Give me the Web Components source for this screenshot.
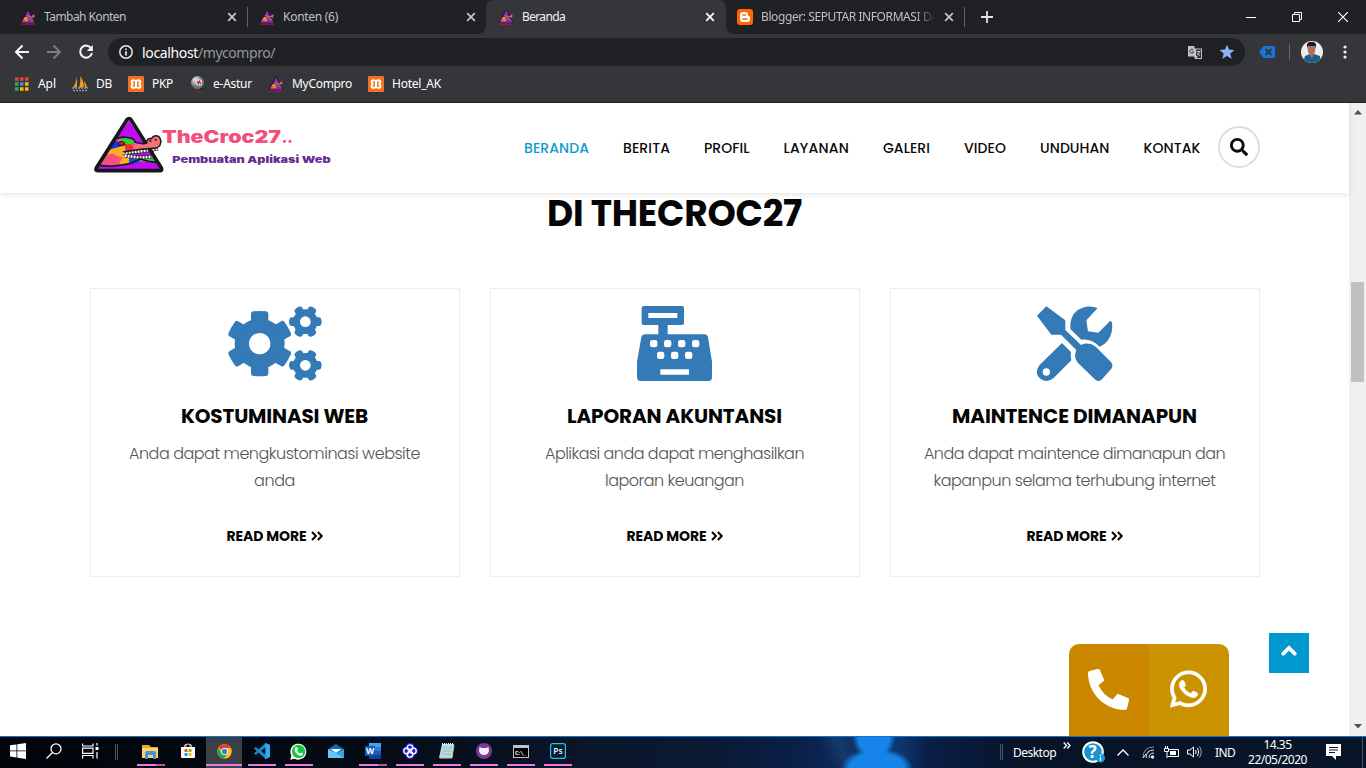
<!DOCTYPE html>
<html lang="id">
<head>
<meta charset="utf-8">
<title>Beranda</title>
<style>
html,body{margin:0;height:100%;overflow:hidden;background:#fff}
body{font-family:"Noto Sans","Open Sans",sans-serif;font-size:12px}
</style>
</head>
<body>
<desktop-screen></desktop-screen>
<script>
const component = (name, css, html) => customElements.define(name, class extends HTMLElement {
  connectedCallback() {
    if (this.shadowRoot) return;
    const body = typeof html === 'function' ? html(this) : html;
    this.attachShadow({ mode: 'open' }).innerHTML = `<style>*{box-sizing:border-box}svg{display:block;flex:none}${css}</style>${body}`;
  }
});

/* A single line of text that is tracked to fill the width given in "w". */
customElements.define('fit-text', class extends HTMLElement {
  connectedCallback() {
    if (this.shadowRoot) return;
    this.attachShadow({ mode: 'open' }).innerHTML =
      `<style>:host{display:inline-block;white-space:nowrap;width:${this.getAttribute('w')}px;text-align:left;flex:none}span{display:inline-block}</style><span><slot></slot></span>`;
    queueMicrotask(() => {
      const span = this.shadowRoot.querySelector('span');
      const natural = span.getBoundingClientRect().width;
      const n = this.textContent.length;
      if (natural) this.style.letterSpacing = ((this.getAttribute('w') - natural) / n).toFixed(3) + 'px';
    });
  }
});

const gear = (cx, cy, r, R, w, hole, start) => {
  let s = `<circle cx="${cx}" cy="${cy}" r="${r}"/>`;
  for (let i = 0; i < 6; i++) s += `<path transform="rotate(${start + i * 60} ${cx} ${cy})" d="M${cx - w},${cy - r * .75}V${cy - R + 8}Q${cx - w},${cy - R + 2} ${cx - w + 7},${cy - R + 1}Q${cx},${cy - R - 1} ${cx + w - 7},${cy - R + 1}Q${cx + w},${cy - R + 2} ${cx + w},${cy - R + 8}V${cy - r * .75}Z"/>`;
  return s + `<circle cx="${cx}" cy="${cy}" r="${hole}" fill="#fff"/>`;
};

const croc = `<path d="M147,46 242,191Q243,197 237,197H56Q48,197 50,190Z" fill="#c40af5"/>
<path d="M57,178 95,122 112,103 137,105 158,118 190,130 134,139 125,150 225,156 229,168 154,172 116,181Z" fill="#f4527a"/>
<path d="M92,128 104,108 131,112 140,120 112,141 84,141Z" fill="#0c35e8"/>
<path d="M88,134 108,128 142,119 127,151 151,157 151,176 122,182 110,154 98,148 80,150Z" fill="#fdae20"/>
<path d="M76,150 98,146 112,153 128,158 112,180 58,178Z" fill="#f4527a"/>
<path d="M112,100 128,101 142,98 162,106 158,118 136,116Z" fill="#23d929"/><path d="M115,114 124,109 134,113 130,121 116,120Z" fill="#e52313" stroke="#191919" stroke-width="3"/>
<path d="M134,120 152,118 163,133 138,136Z" fill="#f22b1e"/>
<path d="M148,158 180,160 178,174 146,178Z" fill="#1747ee"/><path d="M178,160 226,153 230,172 182,168Z" fill="#20dd3a"/>
<path d="M130,142 170,138 222,138 222,154 180,160 140,155Z" fill="#b010e0"/>
<path d="M128,144 182,139 234,131M134,152 180,158 222,155" fill="none" stroke="#191919" stroke-width="11"/>
<path d="M128,144 182,139 234,131M134,152 180,158 222,155" fill="none" stroke="#fff" stroke-width="8" stroke-dasharray="6 3"/>
<path d="M57,181Q90,186 112,182L151,176 180,162 206,169 230,172" fill="none" stroke="#191919" stroke-width="5"/>
<path d="M147,41Q151,41 153,44L244,189Q248,197 239,197H53Q45,197 49,189L141,44Q144,41 147,41Z" fill="none" stroke="#16181a" stroke-width="11"/>
<path d="M158,113 188,116 200,115Q200,98 214,101 222,90 235,94 246,106 238,122L232,128 182,132 158,136 164,124Z" fill="#f4707a"/>
<path d="M99,108Q120,92 145,98 165,100 166,112L188,116 200,115Q200,97 214,101 222,88 236,94 247,106 239,123L230,129 182,133 130,141M208,106 214,110M224,103 230,106" fill="none" stroke="#191919" stroke-width="4.500" stroke-linejoin="round"/>`;
const crocIcon = `<svg width="16" height="16" viewBox="30 30 230 190" preserveAspectRatio="none">${croc}<path d="M45,209H245" stroke="#a81e50" stroke-width="14"/></svg>`;
const xampp = `<svg width="16" height="16" viewBox="0 0 16 16"><rect width="16" height="16" rx="1" fill="#f37021"/><path d="M7.200,5.200Q6.500,4.300 5.400,4.300 3.600,4.400 3.600,6 3.700,7.500 5.400,7.900 3.500,8.400 3.500,10.100 3.700,11.900 5.700,11.900 8,11.700 8,9.500V6.500Q8.200,4.300 10.400,4.300 12.300,4.500 12.300,6 12.200,7.500 10.500,7.900 12.500,8.400 12.500,10.100 12.300,11.900 10.300,11.900 9.300,11.900 8.700,11" fill="none" stroke="#fff" stroke-width="2"/></svg>`;
const closeX = c => `<svg width="10" height="10" viewBox="0 0 10 10"><path d="M1.200,1.200 8.800,8.800M8.800,1.200 1.200,8.800" stroke="${c}" stroke-width="1.700"/></svg>`;
const waPath = 'M380.9 97.1C339 55.1 283.2 32 223.9 32c-122.4 0-222 99.6-222 222 0 39.1 10.2 77.3 29.6 111L0 480l117.7-30.9c32.4 17.7 68.9 27 106.1 27h.1c122.3 0 224.1-99.6 224.1-222 0-59.3-25.2-115-67.1-157zm-157 341.6c-33.2 0-65.7-8.9-94-25.7l-6.7-4-69.8 18.3L72 359.2l-4.4-7c-18.5-29.4-28.2-63.3-28.2-98.2 0-101.7 82.8-184.5 184.6-184.5 49.3 0 95.6 19.2 130.4 54.1 34.8 34.9 56.2 81.2 56.1 130.5 0 101.8-84.9 184.6-186.6 184.6zm101.2-138.2c-5.5-2.8-32.8-16.2-37.9-18-5.1-1.9-8.8-2.8-12.500 2.8-3.7 5.6-14.3 18-17.6 21.8-3.2 3.7-6.5 4.200-12 1.4-32.6-16.3-54-29.1-75.5-66-5.7-9.8 5.7-9.100 16.3-30.3 1.8-3.7.9-6.900-.5-9.700-1.4-2.800-12.500-30.100-17.100-41.200-4.500-10.800-9.100-9.300-12.500-9.500-3.200-.2-6.900-.2-10.600-.2-3.700 0-9.700 1.400-14.800 6.900-5.100 5.600-19.400 19-19.400 46.300 0 27.300 19.900 53.700 22.600 57.400 2.800 3.700 39.100 59.700 94.800 83.800 35.200 15.200 49 16.500 66.600 13.900 10.700-1.600 32.800-13.400 37.400-26.400 4.600-13 4.600-24.100 3.200-26.400-1.300-2.500-5-3.900-10.500-6.600z';

component('browser-tab', `
:host{display:flex;align-items:center;flex:none;width:239px;height:34px;padding:0 10px 0 12px;color:#bdc1c6;position:relative}
:host([active]){width:240px;padding-right:11px;background:#35363a;border-radius:8px 8px 0 0;color:#f1f3f4;z-index:1}
:host([active])::before,:host([active])::after{content:"";position:absolute;bottom:0;width:8px;height:8px}
:host([active])::before{left:-8px;background:radial-gradient(circle at 0 0,transparent 7.5px,#35363a 8px)}
:host([active])::after{right:-8px;background:radial-gradient(circle at 100% 0,transparent 7.5px,#35363a 8px)}
.t{flex:1;margin-left:8px;overflow:hidden;white-space:nowrap;line-height:18px;height:18px}
:host([fade]) .t{-webkit-mask:linear-gradient(90deg,#000 154px,transparent 174px)}
:host([fade]){padding-left:11px;width:238px}
.x{margin-left:8px}
.sep{position:absolute;right:-1px;top:7px;width:1px;height:20px;background:#5f6368}
:host([active]) .sep,:host([nosep]) .sep{display:none}`,
  h => `<slot name="icon">${crocIcon}</slot><div class="t"><slot></slot></div><div class="x">${closeX(h.hasAttribute('active') ? '#fff' : '#c4c7cb')}</div><div class="sep"></div>`);

component('tab-strip', `
:host{display:flex;height:34px;background:#202124;padding-left:8px}
.plus{width:20px;margin-left:13px;display:flex;align-items:center;justify-content:center}
.win{margin-left:auto;display:flex;width:138px;align-items:center}
.win div{width:46px;height:28px;display:grid;place-items:center}`, `
<browser-tab><fit-text w="82">Tambah Konten</fit-text></browser-tab>
<browser-tab nosep><fit-text w="55">Konten (6)</fit-text></browser-tab>
<browser-tab active><fit-text w="43">Beranda</fit-text></browser-tab>
<browser-tab fade><svg slot="icon" width="16" height="16" viewBox="0 0 16 16"><rect width="16" height="16" rx="3" fill="#ff6500"/><path d="M3,6Q3,3 6,3H8Q11,3 11,6 11,7 12,7 13,7 13,8.500V10Q13,13 10,13H6Q3,13 3,10Z" fill="#fff"/><path d="M6,6H8.500M6,10H10" stroke="#ff6500" stroke-width="1.500" stroke-linecap="round"/></svg><fit-text w="186">Blogger: SEPUTAR INFORMASI DAN</fit-text></browser-tab>
<div class="plus"><svg width="12" height="12" viewBox="0 0 12 12"><path d="M6,0V12M0,6H12" stroke="#e0e2e5" stroke-width="1.800"/></svg></div>
<div class="win"><div><svg width="10" height="10"><path d="M0,5.500H10" stroke="#fff"/></svg></div><div><svg width="10" height="10" fill="none" stroke="#fff"><path d="M.5,2.500H7.500V9.500H.5ZM2.500,2.500V.5H9.500V7.500H7.500"/></svg></div><div><svg width="10" height="10"><path d="M0,0 10,10M10,0 0,10" stroke="#fff" stroke-width="1.200"/></svg></div></div>`);

component('address-bar', `
:host{display:flex;height:36px;align-items:center;padding:0 0 0 14px;background:#35363a}
.b{margin-right:16px}
.o{display:flex;align-items:center;width:1137px;height:28px;background:#202124;border-radius:14px;padding:0 10px 0 10px;margin-left:-2px;flex:none}
.u{margin-left:8px;font-size:14px;color:#fff;flex:1;display:flex}.u i{font-style:normal;color:#95999e}
.star{margin-left:16px}
.ext{margin-left:14px}.s{flex:none;width:1px;height:16px;background:#67696d;margin:0 11px 0 14px}.dots{margin-left:20px}`, `
<svg class="b" width="16" height="16" viewBox="0 0 16 16" fill="none" stroke="#f4f5f6" stroke-width="2"><path d="M15,8H2M8.500,1.500 2,8 8.500,14.500"/></svg>
<svg class="b" width="16" height="16" viewBox="0 0 16 16" fill="none" stroke="#7c7e82" stroke-width="1.800"><path d="M1,8H14M7.500,1.500 14,8 7.500,14.500"/></svg>
<svg class="b" width="16" height="16" viewBox="0 0 16 16" fill="none" stroke="#f4f5f6" stroke-width="2"><path d="M13.300,4.500A6,6 0 1 0 14,9"/><path d="M14.800,1V7H8.800Z" fill="#f4f5f6" stroke="none"/></svg>
<div class="o"><svg width="16" height="16" viewBox="0 0 16 16"><circle cx="8" cy="8" r="6.200" fill="none" stroke="#e8eaed" stroke-width="1.500"/><path d="M8,7.300V11.500M8,4.500V6" stroke="#e8eaed" stroke-width="1.700"/></svg>
<div class="u"><fit-text w="56">localhost</fit-text><i><fit-text w="77">/mycompro/</fit-text></i></div>
<svg width="15" height="15" viewBox="0 0 15 15"><path d="M0,1H6L7,3.500H14V14H7L6,11.500H0Z" fill="#bfc1c4"/><path d="M8,4.500H13V13H8.500L10,11 8,11Z" fill="#303236"/><path d="M5.500,5A2,2 0 1 0 5.700,7H4" stroke="#404246" fill="none" stroke-width="1"/><path d="M8.500,6.500H12.500M11.500,6.500Q11,9 9,10.500M9,7.500 12,11" stroke="#ccc" fill="none" stroke-width=".9"/></svg>
<svg class="star" width="16" height="16" viewBox="0 0 16 16"><path d="M8,.7 10,5.500 15.400,5.900 11.300,9.400 12.600,14.800 8,12 3.400,14.800 4.700,9.400 .6,5.900 6,5.500Z" fill="#8ab4f8"/></svg></div>
<svg class="ext" width="16" height="12" viewBox="0 0 16 12"><path d="M0,6 4.500,0H14.500Q16,0 16,1.500V10.500Q16,12 14.500,12H4.500Z" fill="#1a73d9"/><path d="M6.500,3 12.500,9M12.500,3 6.500,9" stroke="#35363a" stroke-width="2"/></svg>
<div class="s"></div>
<svg width="22" height="22" viewBox="0 0 22 22"><defs><clipPath id="a"><circle cx="11" cy="11" r="11"/></clipPath></defs><g clip-path="url(#a)"><rect width="22" height="22" fill="#eceeee"/><path d="M2,22 4,15 9,13H13L19,15 20,22Z" fill="#1d5d8c"/><path d="M8,13H13L11,18Z" fill="#a4684e"/><ellipse cx="10.500" cy="8.500" rx="3.700" ry="5.500" fill="#a87158"/><path d="M6,8V3L8,1H13L15,3V8L14,5H7Z" fill="#1d1b20"/></g></svg>
<svg class="dots" width="4" height="14" viewBox="0 0 4 14" fill="#f1f3f4"><circle cx="2" cy="2" r="1.600"/><circle cx="2" cy="7" r="1.600"/><circle cx="2" cy="12" r="1.600"/></svg>`);

component('book-mark', `:host{display:flex;align-items:center;gap:8px;color:#fff;height:20px}`, `<slot name="icon"></slot><slot></slot>`);

component('bookmark-bar', `
:host{display:flex;height:33px;background:#35363a;border-bottom:1px solid #202124;padding:0 14px 5px;align-items:center;gap:16px}
[slot]{flex:none}`, `
<book-mark><svg slot="icon" width="16" height="14" viewBox="0 0 16 14"><g stroke-width="3.500" stroke-dasharray="3.500 1.500"><path d="M1,2H15" stroke="#ea4335"/><path d="M1,7H5" stroke="#34a853"/><path d="M6,7H10" stroke="#4285f4"/><path d="M11,7H15" stroke="#fbbc05"/><path d="M1,12H5" stroke="#34a853"/><path d="M6,12H15" stroke="#fbbc05"/></g></svg><fit-text w="18">Apl</fit-text></book-mark>
<book-mark><svg slot="icon" width="16" height="16" viewBox="0 0 16 16"><path d="M5,1 5,11 1,12Q4,7 5,1M8,0Q12,5 12,11L7,12Q9,5 8,0M12,5Q15,8 15,12H13Z" fill="#f39a21"/><path d="M0,12H16M1,14.500H15" stroke="#8e94ad" stroke-width="1.500" stroke-dasharray="2 1"/></svg><fit-text w="16">DB</fit-text></book-mark>
<book-mark>${xampp.replace('<svg', '<svg slot="icon"')}<fit-text w="21">PKP</fit-text></book-mark>
<book-mark><svg slot="icon" width="16" height="16" viewBox="0 0 16 16"><defs><radialGradient id="b" cx=".35" cy=".3"><stop offset="0" stop-color="#e7f0f4"/><stop offset="1" stop-color="#66757e"/></radialGradient></defs><circle cx="8.500" cy="6.500" r="6.500" fill="url(#b)"/><circle cx="10" cy="6.500" r="3.200" fill="#dcdfe2"/><path d="M8,5 9.500,8 10.500,5 12,8" stroke="#c92824" fill="none" stroke-width="1.200"/><path d="M2,13Q8,16 14,12V14H2Z" fill="#202124"/><path d="M4,15.300H13" stroke="#8e2222"/></svg><fit-text w="39">e-Astur</fit-text></book-mark>
<book-mark>${crocIcon.replace('<svg', '<svg slot="icon"')}<fit-text w="60">MyCompro</fit-text></book-mark>
<book-mark>${xampp.replace('<svg', '<svg slot="icon"')}<fit-text w="49">Hotel_AK</fit-text></book-mark>`);

component('site-header', `
:host{display:flex;height:90px;background:#fff;padding:2px 0 0 80px;box-shadow:0 1px 6px rgba(0,0,0,.13);position:relative;z-index:1}
nav{display:flex;margin-left:174px;gap:34px;height:86px;align-items:center;font:500 14px/20px Poppins,Inter,sans-serif;color:#0a0a0a}
nav :first-child{color:#0a9dcc}
.s{flex:none;width:42px;height:42px;border:2px solid #dedede;border-radius:50%;display:grid;place-items:center;margin:21px 0 0 17.500px}`, `
<svg width="270" height="90" viewBox="0 0 810 270">${croc}
<g font-family="Inter,sans-serif" font-weight="900"><text x="246" y="114" font-size="51" fill="#f2507a" textLength="357" lengthAdjust="spacingAndGlyphs">TheCroc27</text><text x="605" y="114" font-size="51" fill="#f2507a" textLength="33" lengthAdjust="spacingAndGlyphs">..</text><text x="277" y="173" font-size="28" fill="#652d91" textLength="475" lengthAdjust="spacingAndGlyphs">Pembuatan Aplikasi Web</text></g></svg>
<nav><fit-text w="65">BERANDA</fit-text><fit-text w="47">BERITA</fit-text><fit-text w="45.500">PROFIL</fit-text><fit-text w="65.500">LAYANAN</fit-text><fit-text w="47">GALERI</fit-text><fit-text w="42">VIDEO</fit-text><fit-text w="69.500">UNDUHAN</fit-text><fit-text w="57">KONTAK</fit-text></nav>
<div class="s"><svg width="18" height="18" viewBox="0 0 512 512"><path fill="#0a0a0a" d="M505 442.700L405.300 343c-4.500-4.500-10.600-7-17-7H372c27.600-35.300 44-79.700 44-128C416 93.100 322.900 0 208 0S0 93.100 0 208s93.100 208 208 208c48.300 0 92.700-16.400 128-44v16.300c0 6.400 2.500 12.500 7 17l99.700 99.700c9.400 9.400 24.600 9.400 33.900 0l28.300-28.300c9.400-9.400 9.400-24.600.1-34zM208 336c-70.700 0-128-57.200-128-128 0-70.700 57.200-128 128-128 70.700 0 128 57.200 128 128 0 70.700-57.200 128-128 128z"/></svg></div>`);

component('service-card', `
:host{display:flex;flex:none;flex-direction:column;align-items:center;width:370px;height:289px;border:1px solid #eee;padding:1px 1px 0 0;font-family:Poppins,Inter,sans-serif;color:#050505}
.ic{fill:#337ab7;height:110px;margin-left:1px}
.t{font-size:20px;font-weight:700;line-height:30px;height:30px;margin-top:1px}
.d{font-size:16px;font-weight:300;line-height:27px;color:#555;margin-top:9px;display:flex;flex-direction:column;align-items:center;height:54px}
.m{font-size:14px;font-weight:700;line-height:20px;margin-top:32px;display:flex;align-items:center;gap:4px}`, `
<div class="ic"><slot name="icon"></slot></div><div class="t"><slot name="title"></slot></div><div class="d"><slot></slot></div>
<div class="m"><fit-text w="80">READ MORE</fit-text><svg width="12" height="10" viewBox="0 0 12 10" fill="none" stroke="#050505" stroke-width="2" stroke-linejoin="round"><path d="M1,1 5,5 1,9M6.800,1 10.800,5 6.800,9"/></svg></div>`);

component('scroll-bar', `
:host{display:flex;flex-direction:column;align-items:center;justify-content:space-between;width:17px;background:#f0f0f0;padding:7px 0 7px;flex:none}
.t{width:13px;height:100px;background:#c1c1c1;margin-bottom:175px}`, `
<svg width="8" height="5"><path d="M0,4.500 4,0 8,4.500Z" fill="#505050"/></svg><div class="t"></div><svg width="8" height="5"><path d="M0,0 4,4.500 8,0Z" fill="#505050"/></svg>`);

component('contact-widget', `
:host{display:flex;width:160px;height:92px;border-radius:10px 10px 0 0;overflow:hidden}
div{flex:1;display:flex;justify-content:center;padding:25px 1px 0 0;background:#cb8700}div+div{background:#cb9200;padding-top:26px}`, `
<div><svg width="41" height="41" viewBox="0 0 512 512"><path fill="#fff" d="M497.390 361.800l-112-48a24 24 0 0 0-28 6.900l-49.600 60.600A370.660 370.660 0 0 1 130.600 204.110l60.600-49.600a23.940 23.940 0 0 0 6.900-28l-48-112A24.160 24.160 0 0 0 122.600.61l-104 24A24 24 0 0 0 0 48c0 256.500 207.900 464 464 464a24 24 0 0 0 23.400-18.600l24-104a24.290 24.290 0 0 0-14.010-27.600z"/></svg></div>
<div><svg width="37" height="38" viewBox="-4 24 456 464"><path fill="#fff" stroke="#fff" stroke-width="9" d="${waPath}"/></svg></div>`);

component('web-page', `
:host{display:flex;height:633px;background:#fff;overflow:hidden;position:relative}
main{width:1349px;flex:none;display:flex;flex-direction:column}
h2{margin:0;height:95px;padding-top:3px;text-align:center;font:700 36px/36px Poppins,Inter,sans-serif;color:#050505}
.c{display:flex;gap:30px;padding-left:90px}
contact-widget{position:absolute;right:137px;bottom:0}
.up{position:absolute;left:1269px;top:530px;width:40px;height:40px;background:#0099cf;display:flex;justify-content:center;padding:12px 1px 0 0}`, `
<main><site-header></site-header>
<h2><fit-text w="255">DI THECROC27</fit-text></h2>
<div class="c">
<service-card><svg slot="icon" width="130" height="110" viewBox="0 0 390 330">${gear(149, 161, 75, 98, 26, 32, 0)}${gear(286, 95, 37, 49, 13, 16, 30)}${gear(286, 226, 37, 49, 13, 16, 30)}</svg><fit-text slot="title" w="187">KOSTUMINASI WEB</fit-text><fit-text w="291">Anda dapat mengkustominasi website</fit-text><fit-text w="41">anda</fit-text></service-card>
<service-card><svg slot="icon" width="130" height="110" viewBox="0 0 390 330"><path fill-rule="evenodd" d="M101,48H216Q222,48 222,54V99Q222,105 216,105H173V133H283Q292,133 294,142L306,215V262Q306,273 295,273H92Q81,273 81,262V215L94,142Q96,133 105,133H145V105H101Q95,105 95,99V54Q95,48 101,48ZM115,69V84H202V69ZM151,238V254H237V238Z"/><g fill="#fff">${[[131, 161], [173, 161], [215, 161], [257, 161], [152, 196], [194, 196], [236, 196]].map(([x, y]) => `<rect x="${x - 11}" y="${y - 11}" width="22" height="22" rx="7"/>`).join('')}</g></svg><fit-text slot="title" w="215">LAPORAN AKUNTANSI</fit-text><fit-text w="259">Aplikasi anda dapat menghasilkan</fit-text><fit-text w="139">laporan keuangan</fit-text></service-card>
<service-card><svg slot="icon" width="130" height="110" viewBox="0 0 390 330"><path d="M109,49 166,91V120L213,165Q237,154 258,171L303,216Q311,226 304,236L276,268Q267,277 257,270L204,219Q189,200 199,180L153,134H124L81,77Z"/><path d="M263,54 229,91 234,124 265,128 301,92Q306,93 306,100C311,129 295,162 268,170Q245,145 214,149L181,117Q178,80 202,61 231,42 263,54Z"/><path fill-rule="evenodd" d="M156,159 183,186Q180,198 184,211L131,264Q114,279 93,268 70,252 88,226ZM109,235A11,11 0 1 0 109,257 11,11 0 1 0 109,235Z"/></svg><fit-text slot="title" w="245">MAINTENCE DIMANAPUN</fit-text><fit-text w="301">Anda dapat maintence dimanapun dan</fit-text><fit-text w="282">kapanpun selama terhubung internet</fit-text></service-card>
</div></main>
<scroll-bar></scroll-bar>
<contact-widget></contact-widget>
<div class="up"><svg width="16" height="11" viewBox="0 0 16 11"><path d="M2.300,8.700 8,3 13.700,8.700" fill="none" stroke="#fff" stroke-width="3.800" stroke-linecap="round"/></svg></div>`);

component('task-icon', `
:host{display:grid;place-items:center;width:37px;height:31px;position:relative;flex:none}
:host([wide]){width:36px}
:host([on])::after{content:"";position:absolute;left:5px;bottom:2px;width:28px;height:2px;background:#f277e1}
:host([multi])::after{background:linear-gradient(90deg,#f277e1 19px,#b057a6 19px)}
:host([focused]){background:#3b4048;width:36px;margin-right:1px}
:host([focused])::after{left:0;width:36px}
div{margin-top:-3px}`, `<div><slot></slot></div>`);

component('task-bar', `
:host{display:flex;height:32px;border-top:1px solid #0877cf;color:#fff;overflow:hidden;background:
radial-gradient(ellipse 22px 24px at 874px 0,#1684ea 0 70%,transparent),radial-gradient(ellipse 36px 20px at 877px 31px,#1684ea 0 75%,transparent),
linear-gradient(62deg,transparent 735px,rgba(30,70,125,.55) 752px,transparent 772px),
linear-gradient(90deg,#01040a,#050b16 370px,#0a1528 570px,#0a1a35 720px,#0a2048 800px,#0d376f 900px,#0a2049 925px,#071327 1020px,#081528 1366px)}
.sep{width:3px;height:16px;border:solid #50545b;border-width:0 1px;margin:7px 14px 0 7px;flex:none}
.r{margin-left:auto;display:flex;align-items:center;height:30px;flex:none}
.r .sep{margin:0 10px 0 0}
.chev{margin:-13px 11px 0 7px}.clock{display:flex;flex-direction:column;align-items:center;line-height:15px;margin:0 19px 0 13px}
.edge{width:1px;height:31px;background:#4b535f;margin-left:21px}`, `
<task-icon wide><svg width="16" height="16" viewBox="0 0 16 16" fill="#fff"><path d="M0,2.300 6.500,1.400V7.500H0ZM7.300,1.300 16,0V7.500H7.300ZM0,8.300H6.500V14.500L0,13.600ZM7.300,8.300H16V16L7.300,14.700Z"/></svg></task-icon>
<task-icon wide><svg width="16" height="16" viewBox="0 0 16 16" fill="none" stroke="#fff" stroke-width="1.300"><circle cx="10" cy="5.800" r="5"/><path d="M6.500,9.500 .5,15.500"/></svg></task-icon>
<task-icon wide><svg width="17" height="16" viewBox="0 0 17 16" fill="none" stroke="#fff" stroke-width="1.200"><path d="M.6,.5V3H11V.5M.6,15.500V12.500H11V15.500M.6,5.200H11V10.300H.6ZM15,0V2.500M15,9V15.500"/><path d="M13.500,4H16.500V7H13.500Z" fill="#fff" stroke="none"/></svg></task-icon>
<div class="sep"></div>
<task-icon on multi><svg width="17" height="15" viewBox="0 0 17 15"><path d="M0,1H7L9,3H16V14H0Z" fill="#e9a92a"/><path d="M0,4H16V14H0Z" fill="#ffd45e"/><path d="M3,15V9Q3,7 5,7H12Q14,7 14,9V15H11V11H6V15Z" fill="#3d95dd"/></svg></task-icon>
<task-icon><svg width="16" height="16" viewBox="0 0 16 16"><path d="M4,4Q4,1 8,1 12,1 12,4M6,4V2M10,4V2" fill="none" stroke="#ddd"/><path d="M1,4H15V14Q15,15 14,15H2Q1,15 1,14Z" fill="#fff"/><path d="M4.500,6H7.500V9H4.500Z" fill="#f25022"/><path d="M8.500,6H11.500V9H8.500Z" fill="#7fba00"/><path d="M4.500,10H7.500V13H4.500Z" fill="#00a4ef"/><path d="M8.500,10H11.500V13H8.500Z" fill="#ffb900"/></svg></task-icon>
<task-icon on focused><svg width="15" height="15" viewBox="0 0 30 30"><circle cx="15" cy="15" r="14.500" fill="#fbc116"/><path d="M15,15 2.500,7.500A14.500,14.500 0 0 1 27.600,7.800H15Z" fill="#e04034"/><path d="M2.500,7.500A14.500,14.500 0 0 0 14,29.500L21,18 15,15 9,18Z" fill="#2ba24c"/><circle cx="15" cy="15" r="7" fill="#fff"/><circle cx="15" cy="15" r="5.300" fill="#3e79df"/></svg></task-icon>
<task-icon on><svg width="16" height="16" viewBox="0 0 16 16"><path d="M11.500,0 16,2V14L11.500,16 0,5.500 1.700,4 11.500,11.500V4.500L1.700,12 0,10.500Z" fill="#1689d2"/><path d="M11.500,0 16,2V14L11.500,16Z" fill="#32a8ed"/></svg></task-icon>
<task-icon on><svg width="17" height="17" viewBox="0 0 17 17"><path d="M1.300,12.500A8,8 0 1 1 4.500,15.700L.3,16.700Z" fill="#fff"/><circle cx="8.600" cy="8.400" r="6.700" fill="#14c940"/><path d="M5,4.500 7,4 8,6.500 7,8 9.500,10.500 11,9.500 13,10.500 12,12.500Q8.500,13.500 5.500,9.500 4,7 5,4.500Z" fill="#fff"/></svg></task-icon>
<task-icon><svg width="16" height="14" viewBox="0 0 16 14"><path d="M0,5 8,0 16,5V14H0Z" fill="#1366b2"/><path d="M2.500,5H13.500L8,9Z" fill="#fff"/><path d="M0,5 8,9.500 16,5V14H0Z" fill="#2fa8e9"/><path d="M0,5 16,14H0Z" fill="#66c8f4"/></svg></task-icon>
<task-icon on multi><svg width="16" height="16" viewBox="0 0 16 16"><path d="M4,0H16V4H4Z" fill="#41a5ee"/><path d="M4,4H16V8H4Z" fill="#2b7cd3"/><path d="M4,8H16V12H4Z" fill="#185abd"/><path d="M4,12H16V16H4Z" fill="#103f91"/><path d="M0,3H10V13H0Z" fill="#1a58b5"/><text x="5" y="11" text-anchor="middle" font-size="8.500" font-weight="700" fill="#fff">W</text></svg></task-icon>
<task-icon on><svg width="16" height="16" viewBox="0 0 16 16"><circle cx="8" cy="8" r="5" fill="#2524d4"/><g fill="none" stroke="#2524d4" stroke-width="3.600"><circle cx="8" cy="4.600" r="2.800"/><circle cx="11.400" cy="8" r="2.800"/><circle cx="8" cy="11.400" r="2.800"/><circle cx="4.600" cy="8" r="2.800"/></g><g fill="none" stroke="#fff" stroke-width="1.300"><circle cx="8" cy="4.600" r="2.800"/><circle cx="11.400" cy="8" r="2.800"/><circle cx="8" cy="11.400" r="2.800"/><circle cx="4.600" cy="8" r="2.800"/></g></svg></task-icon>
<task-icon on><svg width="16" height="16" viewBox="0 0 16 16"><path d="M3,1H15L13,15H0Z" fill="#b6dce0"/><path d="M4,5H13M3.500,8H12.500M3,11H12" stroke="#8fbfc6"/><path d="M15,2 13,15H1" fill="none" stroke="#d7c98c"/><path d="M3,1H15" stroke="#e8f3f3" stroke-width="2" stroke-dasharray="1 1"/></svg></task-icon>
<task-icon on><svg width="16" height="16" viewBox="0 0 16 16"><circle cx="8" cy="8" r="8" fill="#7a3a92"/><path d="M3.500,4 6,5H10L12.500,4 13,8Q12,12 8,12 4,12 3,8Z" fill="#f4ecf8"/></svg></task-icon>
<task-icon on><svg width="16" height="13" viewBox="0 0 16 13"><path d="M0,0H16V13H0Z" fill="#bfc3c9"/><path d="M1,3H15V12H1Z" fill="#000"/><text x="2" y="9.800" font-size="6" font-weight="700" fill="#fff" font-family="Liberation Mono,monospace" textLength="11">C:\\_</text></svg></task-icon>
<task-icon on><svg width="16" height="16" viewBox="0 0 16 16"><rect x=".6" y=".6" width="14.800" height="14.800" rx="2" fill="#071d2b" stroke="#30bdf1" stroke-width="1.200"/><text x="8" y="11.300" text-anchor="middle" font-size="8.500" font-weight="600" fill="#d9f3ff">Ps</text></svg></task-icon>
<div class="r"><div class="sep"></div><fit-text w="43">Desktop</fit-text>
<svg class="chev" width="8" height="7" fill="none" stroke="#fff" stroke-width="1.300"><path d="M.7,.5 3.500,3.500 .7,6.500M4.200,.5 7,3.500 4.200,6.500"/></svg>
<svg width="23" height="22" viewBox="0 0 23 22"><circle cx="11" cy="11" r="9.800" fill="#1893cb" stroke="#fff" stroke-width="2"/><text x="10.500" y="17" text-anchor="middle" font-size="17" font-weight="700" fill="#fff">?</text><circle cx="18.500" cy="17" r="4.500" fill="#1a99d2"/><path d="M18.500,16V20M18.500,13.500V15" stroke="#fff" stroke-width="1.300"/></svg>
<svg style="margin-left:12px" width="12" height="7" fill="none" stroke="#fff" stroke-width="1.300"><path d="M.5,6.500 6,1 11.500,6.500"/></svg>
<svg style="margin-left:13px" width="13" height="13" viewBox="0 0 13 13" fill="none" stroke="#e8eaed"><path d="M1,12Q1,1 12,1" stroke="#8d939d"/><path d="M4,12Q4,4 12,4M7,12Q7,7 12,7M1,12 4,8"/><circle cx="10.500" cy="11" r="1.300" fill="#fff"/></svg>
<svg style="margin-left:8px" width="17" height="13" viewBox="0 0 17 13" fill="none" stroke="#fff"><path d="M6,3.500H15.500V10.500H4.500M4,6V12M1.500,2.500H5.500V5.500H1.500ZM2.500,0V2.500M4.500,0V2.500"/><path d="M7,5H13V9H7Z" fill="#fff" stroke="none"/></svg>
<svg style="margin-left:7px" width="16" height="14" viewBox="0 0 16 14" fill="none" stroke="#fff"><path d="M.5,5V9H3L6.500,12V2L3,5ZM8.500,5Q10,7 8.500,9M10.500,3Q13,7 10.500,11"/><path d="M12.500,1.500Q16,7 12.500,12.500" stroke="#a5abb5"/></svg>
<fit-text w="20" style="margin-left:12px">IND</fit-text>
<div class="clock"><fit-text w="28">14.35</fit-text><fit-text w="59">22/05/2020</fit-text></div>
<svg width="15" height="17" viewBox="0 0 15 17"><path d="M0,0H15V12H10V16L6,12H0Z" fill="#fff"/><path d="M3,3.500H12M3,6H12M3,8.500H9" stroke="#0a1628"/></svg><div class="edge"></div><div style="width:3px"></div></div>`);

component('desktop-screen', `:host{display:flex;flex-direction:column;width:1366px;height:768px;overflow:hidden}`,
  `<tab-strip></tab-strip><address-bar></address-bar><bookmark-bar></bookmark-bar><web-page></web-page><task-bar></task-bar>`);
</script>
</body>
</html>
